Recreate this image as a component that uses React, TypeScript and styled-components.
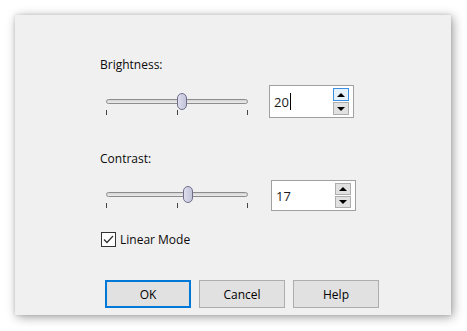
import React, { FC } from "react";
import styled, { createGlobalStyle } from "styled-components";

const GlobalStyle = createGlobalStyle`
    html, body {
        margin: 0;
        padding: 0;
        background: #ffffff;
    }
    body {
        font-family: "Open Sans", "Noto Sans", sans-serif;
        font-size: 12px;
        color: #000000;
    }
`;

const Page = styled.div`
    width: 467px;
    height: 331px;
    padding: 15px 0 0 15px;
    box-sizing: border-box;
`;

const Dialog = styled.div`
    width: 436px;
    height: 300px;
    background: #f0f0f0;
    box-shadow: 2px 2px 10px rgba(0, 0, 0, 0.38), 0 0 3px rgba(0, 0, 0, 0.12);
    box-sizing: border-box;
    padding: 42px 0 0 85px;
    display: flex;
    flex-direction: column;
`;

const Label = styled.div<{ top: number }>`
    margin-top: ${(p) => p.top}px;
    height: 16px;
    line-height: 16px;
    color: #0a0a0a;
`;

const Row = styled.div<{ top: number }>`
    margin-top: ${(p) => p.top}px;
    display: flex;
    align-items: flex-start;
`;

const SliderBox = styled.div<{ offset: number }>`
    position: relative;
    width: 142px;
    height: 22px;
    margin-left: 6px;
    margin-top: ${(p) => p.offset}px;
`;

const Track = styled.div`
    position: absolute;
    left: 0;
    right: 0;
    top: 6px;
    height: 5px;
    box-sizing: border-box;
    border: 1px solid #8c8c8c;
    border-radius: 3px;
    background: linear-gradient(#d4d4d4, #ececec);
`;

const Thumb = styled.div`
    position: absolute;
    top: 0;
    width: 10px;
    height: 17px;
    box-sizing: border-box;
    border: 1px solid #6e6e8c;
    border-radius: 5px;
    background: linear-gradient(90deg, #dcdcec, #c4c4da);
`;

const Tick = styled.div`
    position: absolute;
    top: 17px;
    width: 1px;
    height: 5px;
    background: #444;
`;

const SpinBox = styled.div<{ shift: number; h: number }>`
    position: relative;
    margin-left: ${(p) => 21 + p.shift}px;
    width: 85px;
    height: ${(p) => p.h}px;
    box-sizing: border-box;
    border: 1px solid #a0a0a0;
    background: #ffffff;
    display: flex;
    align-items: center;
    padding-left: 4px;
    font-size: 13px;
    color: #1b1b1b;
`;

const Caret = styled.span`
    display: inline-block;
    width: 1px;
    height: 17px;
    background: #000;
    margin-left: 1px;
`;

const SpinButtons = styled.div`
    position: absolute;
    right: 4px;
    top: 2px;
    bottom: 2px;
    width: 16px;
    display: flex;
    flex-direction: column;
    gap: 1px;
`;

const SpinButton = styled.div<{ hot?: boolean }>`
    flex: 1;
    box-sizing: border-box;
    border: 1px solid ${(p) => (p.hot ? "#3c8fe0" : "#adadad")};
    background: ${(p) => (p.hot ? "#e5f1fb" : "#e1e1e1")};
    display: flex;
    align-items: center;
    justify-content: center;
`;

const Arrow = styled.div<{ up?: boolean }>`
    width: 0;
    height: 0;
    border-left: 4px solid transparent;
    border-right: 4px solid transparent;
    ${(p) =>
        p.up ? "border-bottom: 4px solid #000;" : "border-top: 4px solid #000;"}
`;

const CheckRow = styled.label`
    margin-top: 20px;
    margin-left: 1px;
    display: flex;
    align-items: center;
    gap: 4px;
    height: 16px;
    color: #0a0a0a;
`;

const CheckBox = styled.div`
    width: 15px;
    height: 15px;
    box-sizing: border-box;
    border: 1px solid #333;
    background: #fff;
    display: flex;
    align-items: center;
    justify-content: center;
`;

const ButtonBar = styled.div`
    margin-top: 33px;
    margin-left: 5px;
    display: flex;
    gap: 8px;
`;

const Button = styled.button<{ primary?: boolean }>`
    width: 86px;
    height: 28px;
    box-sizing: border-box;
    border: ${(p) => (p.primary ? "2px solid #0078d7" : "1px solid #adadad")};
    background: #e1e1e1;
    font-family: inherit;
    font-size: 12px;
    color: #000;
    padding: 0;
`;

interface SliderProps {
    value: number;
    min: number;
    max: number;
    offset: number;
}

const Slider: FC<SliderProps> = ({ value, min, max, offset }) => {
    const pos = ((value - min) / (max - min)) * (142 - 10);
    return (
        <SliderBox offset={offset}>
            <Track />
            <Tick style={{ left: 0 }} />
            <Tick style={{ left: 71 }} />
            <Tick style={{ left: 141 }} />
            <Thumb style={{ left: pos }} />
        </SliderBox>
    );
};

interface SpinProps {
    value: number;
    focused?: boolean;
    shift: number;
    h: number;
}

const Spin: FC<SpinProps> = ({ value, focused, shift, h }) => (
    <SpinBox shift={shift} h={h}>
        {value}
        {focused && <Caret />}
        <SpinButtons>
            <SpinButton hot={focused}>
                <Arrow up />
            </SpinButton>
            <SpinButton>
                <Arrow />
            </SpinButton>
        </SpinButtons>
    </SpinBox>
);

const App: FC = () => {
    return (
        <Page>
            <GlobalStyle />
            <Dialog>
                <Label top={0}>Brightness:</Label>
                <Row top={12}>
                    <Slider value={20} min={-255} max={255} offset={8} />
                    <Spin value={20} focused shift={0} h={33} />
                </Row>
                <Label top={33}>Contrast:</Label>
                <Row top={13}>
                    <Slider value={17} min={-100} max={100} offset={6} />
                    <Spin value={17} shift={2} h={31} />
                </Row>
                <CheckRow>
                    <CheckBox>
                        <svg width="11" height="9" viewBox="0 0 11 9">
                            <path
                                d="M1 4.5 L4 7.5 L10 1"
                                fill="none"
                                stroke="#333"
                                strokeWidth="1.3"
                            />
                        </svg>
                    </CheckBox>
                    Linear Mode
                </CheckRow>
                <ButtonBar>
                    <Button primary>OK</Button>
                    <Button>Cancel</Button>
                    <Button>Help</Button>
                </ButtonBar>
            </Dialog>
        </Page>
    );
};

export default App;
